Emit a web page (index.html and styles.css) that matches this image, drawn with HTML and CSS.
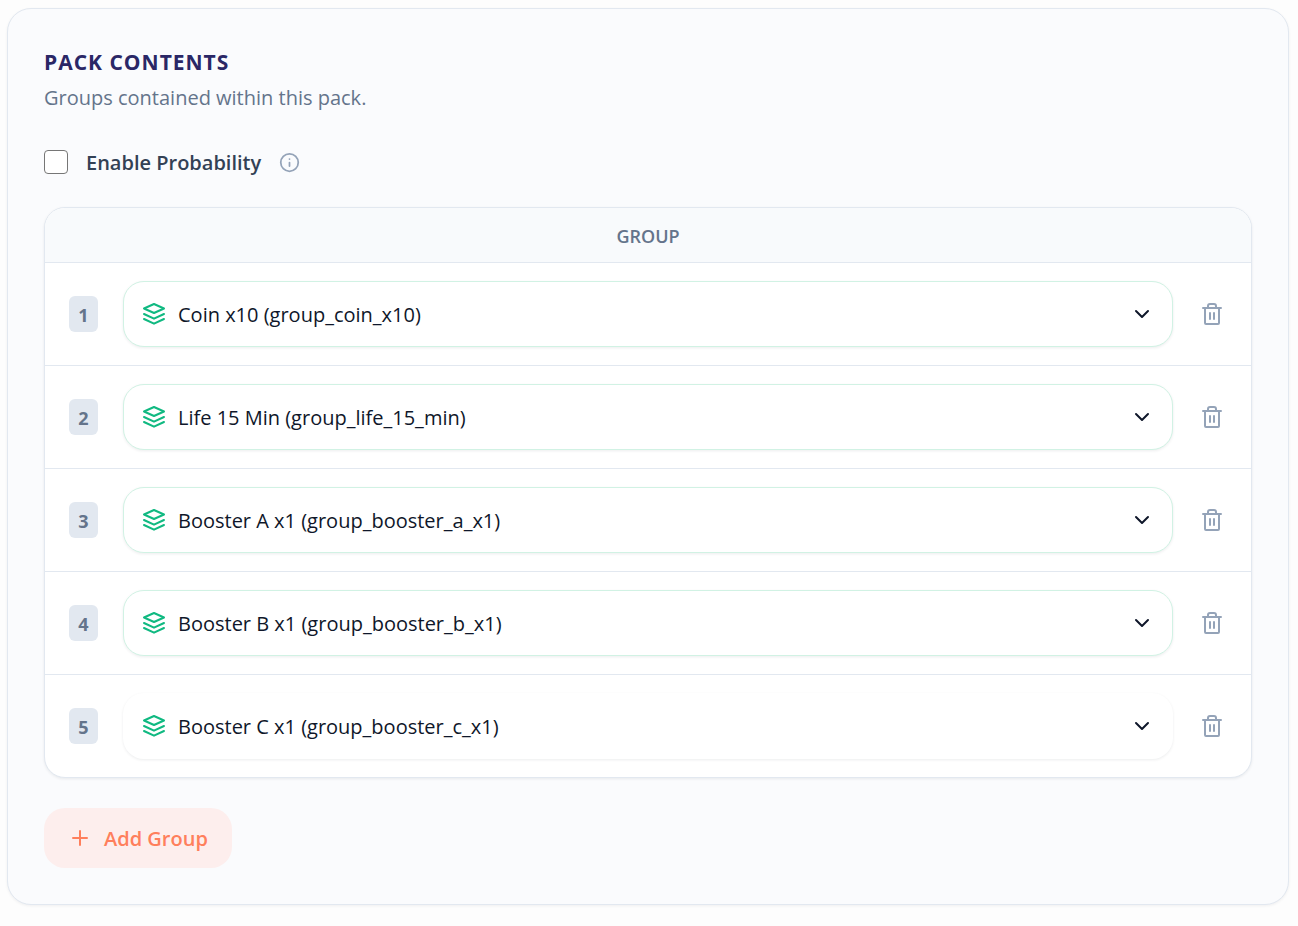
FILE: index.html
```html
<!DOCTYPE html>
<html lang="en">
<head>
<meta charset="utf-8">
<meta name="viewport" content="width=device-width, initial-scale=1">
<title>Pack Contents</title>
<link rel="stylesheet" href="styles.css">
</head>
<body>
<svg class="sprite" aria-hidden="true">
  <symbol id="layers" viewBox="0 0 24 24"><path d="M12 2 22 6.500 12 11 2 6.500ZM2 12l10 4.700 10-4.700M2 17l10 4.700 10-4.700"/></symbol>
  <symbol id="chevron" viewBox="0 0 24 24"><path d="m6 9 6 6 6-6"/></symbol>
  <symbol id="trash" viewBox="0 0 24 24"><path d="M3 6h18M19 6v15a1 1 0 0 1-1 1H6a1 1 0 0 1-1-1V6M8 6V4a2 2 0 0 1 2-2h4a2 2 0 0 1 2 2v2M10 11v6M14 11v6"/></symbol>
</svg>
<main class="card">
  <header class="card-header">
    <h2 class="title">PACK CONTENTS</h2>
    <p class="subtitle">Groups contained within this pack.</p>
  </header>
  <div class="option">
    <input class="checkbox" type="checkbox" id="probability">
    <label class="option-label" for="probability">Enable Probability</label>
    <button class="icon-button info" type="button" aria-label="About probability">
      <svg viewBox="0 0 24 24"><circle cx="12" cy="12" r="10"/><path d="M12 16v-4M12 8h.01"/></svg>
    </button>
  </div>
  <div class="table-frame">
    <table class="groups">
      <thead>
        <tr><th colspan="3" scope="colgroup">GROUP</th></tr>
      </thead>
      <tbody>
        <tr>
          <td class="index-cell"><span class="badge">1</span></td>
          <td><div class="picker"><svg class="layers"><use href="#layers"/></svg><select class="select" aria-label="Group 1"><option>Coin x10 (group_coin_x10)</option></select><svg class="chevron"><use href="#chevron"/></svg></div></td>
          <td class="action-cell"><button class="icon-button" type="button" aria-label="Remove group 1"><svg class="trash"><use href="#trash"/></svg></button></td>
        </tr>
        <tr>
          <td class="index-cell"><span class="badge">2</span></td>
          <td><div class="picker"><svg class="layers"><use href="#layers"/></svg><select class="select" aria-label="Group 2"><option>Life 15 Min (group_life_15_min)</option></select><svg class="chevron"><use href="#chevron"/></svg></div></td>
          <td class="action-cell"><button class="icon-button" type="button" aria-label="Remove group 2"><svg class="trash"><use href="#trash"/></svg></button></td>
        </tr>
        <tr>
          <td class="index-cell"><span class="badge">3</span></td>
          <td><div class="picker"><svg class="layers"><use href="#layers"/></svg><select class="select" aria-label="Group 3"><option>Booster A x1 (group_booster_a_x1)</option></select><svg class="chevron"><use href="#chevron"/></svg></div></td>
          <td class="action-cell"><button class="icon-button" type="button" aria-label="Remove group 3"><svg class="trash"><use href="#trash"/></svg></button></td>
        </tr>
        <tr>
          <td class="index-cell"><span class="badge">4</span></td>
          <td><div class="picker"><svg class="layers"><use href="#layers"/></svg><select class="select" aria-label="Group 4"><option>Booster B x1 (group_booster_b_x1)</option></select><svg class="chevron"><use href="#chevron"/></svg></div></td>
          <td class="action-cell"><button class="icon-button" type="button" aria-label="Remove group 4"><svg class="trash"><use href="#trash"/></svg></button></td>
        </tr>
        <tr>
          <td class="index-cell"><span class="badge">5</span></td>
          <td><div class="picker"><svg class="layers"><use href="#layers"/></svg><select class="select" aria-label="Group 5"><option>Booster C x1 (group_booster_c_x1)</option></select><svg class="chevron"><use href="#chevron"/></svg></div></td>
          <td class="action-cell"><button class="icon-button" type="button" aria-label="Remove group 5"><svg class="trash"><use href="#trash"/></svg></button></td>
        </tr>
      </tbody>
    </table>
  </div>
  <button class="add-button" type="button">
    <svg viewBox="0 0 24 24"><path d="M5 12h14M12 5v14"/></svg>
    <span class="add-label">Add Group</span>
  </button>
</main>
</body>
</html>
```

FILE: styles.css
```css
*, *::before, *::after { box-sizing: border-box; }

body {
  margin: 0;
  padding: 8px 9px 20px 7px;
  background: #fdfdfd;
  color: #0f172a;
  font-family: "Open Sans", "Noto Sans", sans-serif;
  font-size: 20px;
  line-height: 30px;
}

button, select, input { font: inherit; color: inherit; margin: 0; }

svg {
  display: block;
  flex: none;
  fill: none;
  stroke: currentColor;
  stroke-width: 2;
  stroke-linecap: round;
  stroke-linejoin: round;
}

.sprite { position: absolute; width: 0; height: 0; }

.card {
  padding: 36px;
  border: 1px solid #e2e8f0;
  border-radius: 24px;
  background: #fafbfd;
  box-shadow: 0 1px 3px rgba(15, 23, 42, 0.06);
}

.card-header { display: grid; gap: 6px; padding-top: 2px; }

.title {
  margin: 0;
  color: #2a2766;
  font-size: 21px;
  font-weight: 700;
  line-height: 30px;
  letter-spacing: 1px;
}

.subtitle { margin: 0; color: #64748b; }

.option {
  display: flex;
  align-items: center;
  margin: 33px 0 29px;
}

.checkbox {
  appearance: none;
  width: 24px;
  height: 24px;
  margin-right: 18px;
  border: 1px solid #767676;
  border-radius: 4px;
  background: #fff;
}

.checkbox:checked { background: #ff7f5c; }

.option-label { margin-right: 18px; padding-top: 2px; color: #334155; font-weight: 600; }

.icon-button {
  display: inline-flex;
  padding: 0;
  border: 0;
  background: none;
  color: #94a3b8;
  cursor: pointer;
}

.info svg { width: 21px; height: 21px; }

.table-frame {
  overflow: hidden;
  border: 1px solid #e2e8f0;
  border-radius: 21px;
  background: #fff;
  box-shadow: 0 1px 3px rgba(15, 23, 42, 0.08);
}

.groups { width: 100%; border-collapse: separate; border-spacing: 0; }

.groups th {
  height: 55px;
  padding: 2px 0 0;
  border-bottom: 1px solid #e2e8f0;
  background: #f8fafc;
  color: #64748b;
  font-size: 18px;
  font-weight: 600;
  line-height: 24px;
}

.groups td { padding: 18px 0; border-bottom: 1px solid #e2e8f0; vertical-align: middle; }
.groups tr:last-child td { border-bottom: 0; }

.groups .index-cell { width: 78px; padding-left: 24px; }
.groups .action-cell { width: 78px; padding-left: 27px; }
.action-cell .icon-button { display: flex; }

.badge {
  display: block;
  width: 29px;
  padding-top: 2px;
  border-radius: 6px;
  background: #e2e8f0;
  color: #64748b;
  font-size: 18px;
  font-weight: 700;
  line-height: 34px;
  text-align: center;
}

.picker {
  display: grid;
  grid-template-columns: 54px 1fr 42px;
  align-items: center;
  border: 1px solid #d1f2e4;
  border-radius: 21px;
  background: #fff;
  box-shadow: 0 1px 3px rgba(15, 23, 42, 0.08);
}

.groups tr:last-child .picker { border-color: transparent; }

.layers, .select, .chevron { grid-row: 1; }

.layers { grid-column: 1; width: 24px; height: 24px; margin-left: 18px; color: #10b981; }

.select {
  grid-column: 1 / -1;
  width: 100%;
  height: 64px;
  padding: 2px 54px 0;
  border: 0;
  border-radius: 20px;
  appearance: none;
  background: transparent;
  cursor: pointer;
}

.chevron { grid-column: 3; width: 24px; height: 24px; pointer-events: none; }
.trash { width: 24px; height: 24px; }

.add-button {
  display: flex;
  align-items: center;
  gap: 12px;
  height: 60px;
  margin-top: 30px;
  padding: 0 24px;
  border: 0;
  border-radius: 21px;
  background: #fdeeed;
  color: #ff7f5c;
  font-weight: 600;
  cursor: pointer;
}

.add-button svg { width: 24px; height: 24px; }
.add-label { padding-top: 2px; }
```
